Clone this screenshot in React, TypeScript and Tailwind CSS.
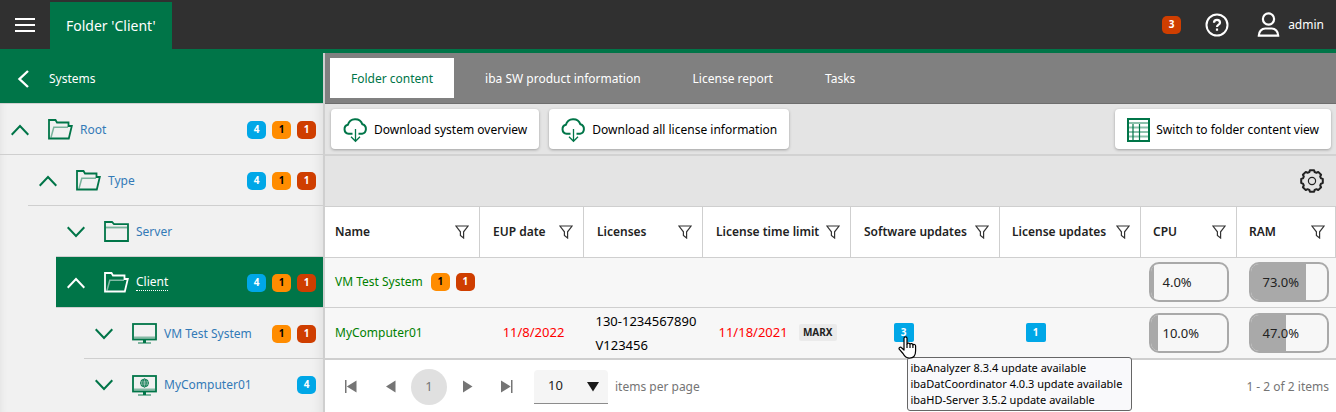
import type { ReactNode } from "react";

type BadgeTone = "blue" | "orange" | "red";

interface BadgeData {
  tone: BadgeTone;
  count: number;
}

interface TreeItem {
  name: string;
  icon: "open" | "closed" | "monitor" | "web";
  expanded: boolean;
  indent: string;
  selected?: boolean;
  badges: BadgeData[];
}

const toneClasses: Record<BadgeTone, string> = {
  blue: "bg-[#00a7e7] text-white",
  orange: "bg-[#ff8c00] text-black",
  red: "bg-[#cf3e00] text-white",
};

const treeItems: TreeItem[] = [
  {
    name: "Root",
    icon: "open",
    expanded: true,
    indent: "ml-0",
    badges: [
      { tone: "blue", count: 4 },
      { tone: "orange", count: 1 },
      { tone: "red", count: 1 },
    ],
  },
  {
    name: "Type",
    icon: "open",
    expanded: true,
    indent: "ml-7",
    badges: [
      { tone: "blue", count: 4 },
      { tone: "orange", count: 1 },
      { tone: "red", count: 1 },
    ],
  },
  { name: "Server", icon: "closed", expanded: false, indent: "ml-14", badges: [] },
  {
    name: "Client",
    icon: "open",
    expanded: true,
    indent: "ml-14",
    selected: true,
    badges: [
      { tone: "blue", count: 4 },
      { tone: "orange", count: 1 },
      { tone: "red", count: 1 },
    ],
  },
  {
    name: "VM Test System",
    icon: "monitor",
    expanded: false,
    indent: "ml-21",
    badges: [
      { tone: "orange", count: 1 },
      { tone: "red", count: 1 },
    ],
  },
  {
    name: "MyComputer01",
    icon: "web",
    expanded: false,
    indent: "ml-21",
    badges: [{ tone: "blue", count: 4 }],
  },
];

const tabs = ["Folder content", "iba SW product information", "License report", "Tasks"];

const columns = [
  { label: "Name", width: "w-auto", pad: "pl-2.5" },
  { label: "EUP date", width: "w-[104px]", pad: "pl-[13px]" },
  { label: "Licenses", width: "w-[119px]", pad: "pl-[13px]" },
  { label: "License time limit", width: "w-[148px]", pad: "pl-[13px]" },
  { label: "Software updates", width: "w-[149px]", pad: "pl-[13px]" },
  { label: "License updates", width: "w-[141px]", pad: "pl-3" },
  { label: "CPU", width: "w-[96px]", pad: "pl-3" },
  { label: "RAM", width: "w-[99px]", pad: "pl-3" },
];

function Badge({ tone, count }: BadgeData) {
  return (
    <span
      className={`flex h-[18px] w-[19px] shrink-0 items-center justify-center rounded-[5px] text-[10px] font-bold ${toneClasses[tone]}`}
    >
      {count}
    </span>
  );
}

function UpdateBadge({ count }: { count: number }) {
  return (
    <span className="flex h-[19px] w-5 items-center justify-center rounded-xs bg-[#00a7e7] text-[10px] font-bold text-white">
      {count}
    </span>
  );
}

function Chevron({ up }: { up: boolean }) {
  return (
    <svg width="18" height="12" viewBox="0 0 18 12" fill="none" stroke="currentColor" strokeWidth="2">
      <path d={up ? "M.7 10.7 9 2l8.3 8.7" : "M.7 1.3 9 10l8.3-8.7"} />
    </svg>
  );
}

function TreeIcon({ icon }: { icon: TreeItem["icon"] }) {
  if (icon === "open") {
    return (
      <svg width="25" height="21" viewBox="0 0 25 21" fill="none" stroke="currentColor" strokeWidth="1.8">
        <path d="M3 18.500 5.800 8.200H20" strokeWidth="1.500" opacity=".5" />
        <path d="M1 19.500V1h6.500l1.500 2.500h11.500v3.500h3.300l-3 12.500z" />
      </svg>
    );
  }
  if (icon === "closed") {
    return (
      <svg width="25" height="21" viewBox="0 0 25 21" fill="none" stroke="currentColor" strokeWidth="1.8">
        <path d="M1 20V1h7l2 2.200h14V20z" />
        <path d="M1.500 6.500h22" opacity=".5" />
      </svg>
    );
  }
  return (
    <svg width="25" height="21" viewBox="0 0 25 21" fill="none" stroke="currentColor">
      <rect x="1" y="1" width="23" height="15.500" strokeWidth="1.8" />
      <path d="M2 14.500h21" strokeWidth="2" opacity=".45" />
      <path d="M12.500 16v4" strokeWidth="3" />
      <path d="M6 20h13" strokeWidth="1.600" opacity=".6" />
      {icon === "web" && (
        <g strokeWidth=".9">
          <circle cx="12.500" cy="8" r="4" />
          <ellipse cx="12.500" cy="8" rx="1.700" ry="4" />
          <path d="M8.500 8h8M9.300 5.900h6.400M9.300 10.100h6.400" />
        </g>
      )}
    </svg>
  );
}

function CloudDownload() {
  return (
    <svg width="25" height="26" viewBox="0 0 25 26" fill="none" stroke="#007548">
      <path
        d="M9.500 16.800H5.600A4.600 4.600 0 0 1 4.900 7.800 7.600 7.600 0 0 1 19.400 7.300 4.900 4.900 0 0 1 19 16.800h-3.500"
        strokeWidth="2"
      />
      <path d="M12.500 12v12M8 19.800l4.500 4.500 4.500-4.500" strokeWidth="1.300" />
    </svg>
  );
}

function GridIcon() {
  return (
    <svg width="23" height="24" viewBox="0 0 23 24" fill="none" stroke="#007548">
      <path d="M1 5h21M1 9.500h21M1 14h21M1 18.500h21" strokeWidth="2" opacity=".45" />
      <path d="M6 6v17M12.500 6v17" strokeWidth="1.200" />
      <rect x="1" y="1" width="21" height="22" strokeWidth="2" />
    </svg>
  );
}

function Funnel() {
  return (
    <svg width="14" height="14" viewBox="0 0 14 14" fill="none" stroke="#333" strokeWidth="1.200">
      <path d="M.9 1h12.200L8.600 6.800V13L5.400 10.500V6.800z" />
    </svg>
  );
}

function Gear() {
  return (
    <svg width="26" height="26" viewBox="0 0 26 26" fill="none" stroke="#222">
      <path
        d="M10.400 4 10.900 2.200H15.100L15.600 4 17.500 4.800 19.200 3.900 22.100 6.800 21.200 8.500 22 10.400 23.800 10.900V15.100L22 15.600 21.200 17.500 22.100 19.200 19.200 22.100 17.500 21.200 15.600 22 15.100 23.800H10.900L10.400 22 8.500 21.200 6.800 22.100 3.900 19.200 4.800 17.500 4 15.600 2.200 15.100V10.900L4 10.400 4.800 8.500 3.900 6.800 6.800 3.900 8.500 4.800z"
        strokeWidth="2"
        strokeLinejoin="round"
      />
      <circle cx="13" cy="13" r="3.600" strokeWidth="1.200" />
    </svg>
  );
}

function HandCursor() {
  return (
    <svg width="19" height="23" viewBox="0 0 19 23" fill="#fff" stroke="#000" strokeWidth="1.200" strokeLinejoin="round">
      <path d="M6 14V2.300a1.500 1.500 0 0 1 3 0V8c.2-1.300 2.700-1.200 3 .3.400-1.100 2.700-.9 2.900.6.600-.9 2.700-.6 2.700 1.200v4.700c0 4.500-2.300 7.300-6.100 7.300-3.500 0-5-1.700-6.500-4.600L1.200 13.200c-.7-1.500 1.200-2.700 2.300-1.500z" />
      <path d="M9 8v4M12 8.500V12M14.900 9v3" fill="none" />
    </svg>
  );
}

function Header() {
  return (
    <header className="flex h-[53px] items-stretch border-b-4 border-[#007548] bg-[#303030] text-white">
      <button aria-label="Menu" className="flex w-[50px] items-center justify-center">
        <svg width="20" height="16" viewBox="0 0 20 16" stroke="currentColor" strokeWidth="2">
          <path d="M0 2h20M0 8h20M0 14h20" />
        </svg>
      </button>
      <a href="#client" className="mt-[2px] flex items-center bg-[#007548] px-4 text-sm">
        Folder 'Client'
      </a>
      <div className="ml-auto flex items-center pr-3">
        <Badge tone="red" count={3} />
        <button aria-label="Help" className="ml-6">
          <svg width="24" height="24" viewBox="0 0 24 24" fill="none" stroke="currentColor" strokeWidth="2">
            <circle cx="12" cy="12" r="10.500" />
            <path d="M9 9.700c0-3.700 6-3.700 6 0 0 2-3 1.800-3 4.300M12 15.500v2.200" strokeWidth="2.200" />
          </svg>
        </button>
        <button className="ml-7 flex items-center gap-2">
          <svg width="23" height="25" viewBox="0 0 22 25" fill="none" stroke="currentColor" strokeWidth="2.200">
            <circle cx="11" cy="7" r="5.600" />
            <path d="M1.300 23.700c0-4.200 3-7.200 6.400-7.200h6.600c3.400 0 6.400 3 6.400 7.200z" />
          </svg>
          admin
        </button>
      </div>
    </header>
  );
}

function Sidebar() {
  return (
    <aside className="flex w-[325px] shrink-0 flex-col border-r-2 border-[#cfcfcf] bg-[#f1f1f1]">
      <div className="flex h-[51px] items-center border-b border-[#d0d0d0] bg-[#007548] pt-px text-white">
        <button aria-label="Collapse" className="ml-[17px]">
          <svg width="12" height="18" viewBox="0 0 12 18" fill="none" stroke="currentColor" strokeWidth="2.400">
            <path d="M11 1 2.500 9l8.500 8" />
          </svg>
        </button>
        <h2 className="ml-5">Systems</h2>
      </div>
      <nav className="grow shadow-[inset_8px_0_8px_-8px_rgba(0,0,0,0.08),inset_-14px_0_12px_-12px_rgba(0,0,0,0.08)]">
        {treeItems.map((item) => (
          <div
            key={item.name}
            className={`flex h-[51px] items-center border-b border-[#cfcfcf] pt-px pr-[7px] pl-[11px] last:border-b-0 ${item.indent} ${
              item.selected ? "bg-[#007548] text-white" : "text-[#007548]"
            }`}
          >
            <button aria-label={item.expanded ? "Collapse" : "Expand"}>
              <Chevron up={item.expanded} />
            </button>
            <span className="ml-[19px]">
              <TreeIcon icon={item.icon} />
            </span>
            <a
              href={`#${item.name}`}
              className={`ml-[7px] ${
                item.selected ? "border-b border-dotted border-white leading-4" : "text-[#337ab7]"
              }`}
            >
              {item.name}
            </a>
            <div className="ml-auto flex gap-1.5">
              {item.badges.map((badge) => (
                <Badge key={badge.tone} {...badge} />
              ))}
            </div>
          </div>
        ))}
      </nav>
    </aside>
  );
}

function ToolButton({ icon, children }: { icon: ReactNode; children: ReactNode }) {
  return (
    <button className="flex h-10 items-center gap-1.5 rounded-sm bg-white px-3 pt-px text-black shadow-[0_1px_3px_rgba(0,0,0,0.3)]">
      {icon}
      {children}
    </button>
  );
}

function UsageBar({ value }: { value: number }) {
  return (
    <div className="relative flex h-10 w-20 items-center overflow-hidden rounded-[10px] border-2 border-[#a9a9a9]">
      <div className="absolute inset-y-0 left-0 bg-[#a9a9a9]" style={{ width: `${value}%` }} />
      <span className="relative pt-px pl-3 text-[13px] text-[#222]">{value.toFixed(1)}%</span>
    </div>
  );
}

function SystemsTable() {
  return (
    <table className="w-full table-fixed border-collapse text-left">
      <thead>
        <tr className="h-[50px] border-b border-[#cfcfcf] bg-white">
          {columns.map((column) => (
            <th key={column.label} className={`border-r border-[#cfcfcf] pt-px pr-[10px] text-[#222] ${column.width} ${column.pad}`}>
              <div className="flex items-center justify-between font-semibold whitespace-nowrap">
                {column.label}
                <button aria-label={`Filter ${column.label}`}>
                  <Funnel />
                </button>
              </div>
            </th>
          ))}
        </tr>
      </thead>
      <tbody className="bg-[#f7f7f7]">
        <tr className="h-[50px] border-b border-[#cfcfcf]">
          <td className="pl-2.5">
            <div className="flex items-center gap-1.5 whitespace-nowrap">
              <a href="#vm" className="mr-0.5 text-[#008000]">
                VM Test System
              </a>
              <Badge tone="orange" count={1} />
              <Badge tone="red" count={1} />
            </div>
          </td>
          <td />
          <td />
          <td />
          <td />
          <td />
          <td className="pl-2">
            <UsageBar value={4} />
          </td>
          <td className="pl-3">
            <UsageBar value={73} />
          </td>
        </tr>
        <tr className="h-[52px] border-b-2 border-[#cfcfcf]">
          <td className="pl-2.5">
            <a href="#mycomputer" className="text-[#008000]">
              MyComputer01
            </a>
          </td>
          <td className="pl-1 text-center text-[13px] text-[#f00]">11/8/2022</td>
          <td className="pl-3 text-[13px] leading-6 text-black">
            130-1234567890
            <br />
            V123456
          </td>
          <td className="pl-4">
            <div className="flex items-center justify-between pr-[14px] text-[13px] text-[#f00]">
              11/18/2021
              <span className="rounded-xs bg-[#ebebeb] px-1 text-[10px] leading-[17px] font-bold text-[#222]">MARX</span>
            </div>
          </td>
          <td className="pl-[43px]">
            <div className="relative w-5">
              <UpdateBadge count={3} />
              <div
                role="tooltip"
                className="absolute top-[34px] left-[13px] z-10 rounded-[3px] border border-[#666] bg-[#f9f9fb] py-[2px] pr-[9px] pl-[3px] text-[11px] leading-4 whitespace-nowrap text-black"
              >
                <p>ibaAnalyzer 8.3.4 update available</p>
                <p>ibaDatCoordinator 4.0.3 update available</p>
                <p>ibaHD-Server 3.5.2 update available</p>
              </div>
              <span className="absolute top-[13px] left-1 z-20">
                <HandCursor />
              </span>
            </div>
          </td>
          <td className="pl-[26px]">
            <UpdateBadge count={1} />
          </td>
          <td className="pl-2">
            <UsageBar value={10} />
          </td>
          <td className="pl-3">
            <UsageBar value={47} />
          </td>
        </tr>
      </tbody>
    </table>
  );
}

function Pager() {
  return (
    <footer className="flex h-[52px] items-center pt-px pr-[7px] pl-5 text-[#757575]">
      <button aria-label="First page">
        <svg width="12" height="13" viewBox="0 0 12 13" fill="currentColor">
          <path d="M0 0h1.500v13H0zM11.500.5v12L1.800 6.500z" />
        </svg>
      </button>
      <button aria-label="Previous page" className="ml-[29px]">
        <svg width="10" height="13" viewBox="0 0 10 13" fill="currentColor">
          <path d="M9.500.5v12L0 6.500z" />
        </svg>
      </button>
      <button className="mr-4 ml-[15px] size-9 rounded-full bg-[#e0e0e0] text-[13px]">1</button>
      <button aria-label="Next page">
        <svg width="10" height="13" viewBox="0 0 10 13" fill="currentColor">
          <path d="M0 .5v12l9.500-6z" />
        </svg>
      </button>
      <button aria-label="Last page" className="ml-7">
        <svg width="12" height="13" viewBox="0 0 12 13" fill="currentColor">
          <path d="M10 0h1.500v13H10zM0 .5v12l9.700-6z" />
        </svg>
      </button>
      <div className="relative ml-[21px]">
        <select
          id="page-size"
          defaultValue="10"
          className="h-[34px] w-[74px] appearance-none rounded-t-sm border-b border-[#8c8c8c] bg-[#f5f5f5] pl-[14px] text-[13px] text-[#222]"
        >
          <option>10</option>
          <option>20</option>
          <option>50</option>
        </select>
        <svg className="pointer-events-none absolute top-3 right-[9px]" width="12" height="10" viewBox="0 0 12 10" fill="#1a1a1a">
          <path d="M0 0h12L6 9.500z" />
        </svg>
      </div>
      <label htmlFor="page-size" className="ml-[7px]">
        items per page
      </label>
      <span className="ml-auto">1 - 2 of 2 items</span>
    </footer>
  );
}

export default function App() {
  return (
    <div className="flex min-h-screen flex-col bg-white font-['Noto_Sans','Open_Sans',sans-serif] text-xs">
      <Header />
      <div className="flex grow">
        <Sidebar />
        <main className="min-w-0 grow">
          <div className="flex h-[51px] items-center gap-2.5 border-b border-[#6e6e6e] bg-[#808080] px-[5px]">
            {tabs.map((tab, i) => (
              <button key={tab} className={`h-10 px-[21px] pt-px ${i === 0 ? "bg-white text-[#007548]" : "text-white"}`}>
                {tab}
              </button>
            ))}
          </div>
          <div className="flex h-[52px] items-center gap-2.5 border-b-2 border-[#d2d2d2] bg-[#e4e4e4] pr-[5px] pl-1.5">
            <ToolButton icon={<CloudDownload />}>Download system overview</ToolButton>
            <ToolButton icon={<CloudDownload />}>Download all license information</ToolButton>
            <div className="ml-auto">
              <ToolButton icon={<GridIcon />}>Switch to folder content view</ToolButton>
            </div>
          </div>
          <div className="flex h-[51px] items-center justify-end border-b border-[#cfcfcf] bg-[#e4e4e4] pr-[11px]">
            <button aria-label="Settings">
              <Gear />
            </button>
          </div>
          <SystemsTable />
          <Pager />
        </main>
      </div>
    </div>
  );
}
